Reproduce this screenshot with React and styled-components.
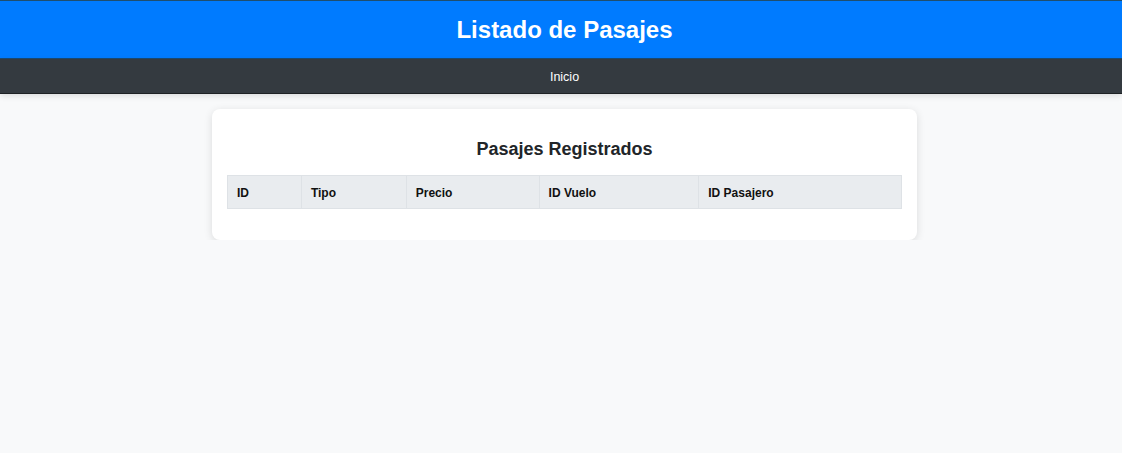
import React from "react";
import styled, { createGlobalStyle } from "styled-components";

const GlobalStyle = createGlobalStyle`
  html, body { margin: 0; padding: 0; background: #f8f9fa; }
  body { font-family: "Liberation Sans", Arial, sans-serif; color: #212529; }
`;

const Header = styled.header`
  background: #007bff;
  border-top: 1px solid #1f4e6e;
  border-bottom: 1px solid #1b4a72;
  height: 57px;
  display: flex;
  align-items: center;
  justify-content: center;
  padding-left: 7px;
`;

const Title = styled.h1`
  margin: 0;
  color: #fff;
  font-size: 24px;
  font-weight: bold;
`;

const Nav = styled.nav`
  background: #343a40;
  height: 34px;
  border-bottom: 1px solid #1d2124;
  box-shadow: 0 2px 6px rgba(0, 0, 0, 0.12);
  display: flex;
  align-items: center;
  justify-content: center;
  padding-left: 7px;
  padding-top: 2px;
  box-sizing: border-box;
  height: 35px;
`;

const NavLink = styled.a`
  color: #fff;
  font-size: 12.5px;
  text-decoration: none;
`;

const Main = styled.main`
  padding: 15px 0 0 7px;
  display: flex;
  justify-content: center;
`;

const Card = styled.section`
  width: 675px;
  background: #fff;
  border-radius: 8px;
  box-shadow: 0 2px 8px rgba(0, 0, 0, 0.12);
  padding: 15px;
`;

const CardTitle = styled.h2`
  margin: 15px 0 15px;
  text-align: center;
  font-size: 18px;
  line-height: 21px;
  font-weight: bold;
  color: #212529;
`;

const Table = styled.table`
  width: 100%;
  border-collapse: collapse;
  margin-bottom: 16px;
`;

const Th = styled.th`
  background: #e9ecef;
  border: 1px solid #dee2e6;
  height: 33px;
  padding: 1px 9px 0;
  text-align: left;
  font-size: 12px;
  font-weight: bold;
  color: #111;
  width: ${(p) => p.$w}px;
  box-sizing: border-box;
`;

const columns = [
  { label: "ID", w: 74 },
  { label: "Tipo", w: 105 },
  { label: "Precio", w: 133 },
  { label: "ID Vuelo", w: 160 },
  { label: "ID Pasajero", w: 203 },
];

export default function App() {
  return (
    <>
      <GlobalStyle />
      <Header>
        <Title>Listado de Pasajes</Title>
      </Header>
      <Nav>
        <NavLink href="#">Inicio</NavLink>
      </Nav>
      <Main>
        <Card>
          <CardTitle>Pasajes Registrados</CardTitle>
          <Table>
            <thead>
              <tr>
                {columns.map((c) => (
                  <Th key={c.label} $w={c.w}>
                    {c.label}
                  </Th>
                ))}
              </tr>
            </thead>
            <tbody />
          </Table>
        </Card>
      </Main>
    </>
  );
}
